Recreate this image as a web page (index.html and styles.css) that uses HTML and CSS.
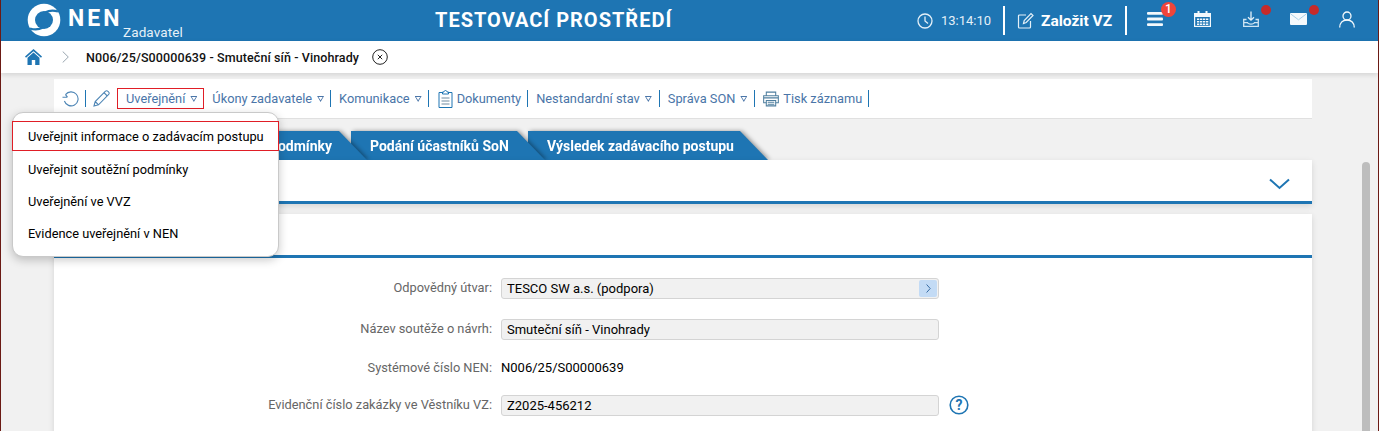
FILE: index.html
```html
<!DOCTYPE html>
<html lang="cs">
<head>
<meta charset="utf-8">
<title>NEN</title>
<link rel="stylesheet" href="styles.css">
</head>
<body>
<div class="app">
  <header class="top">
    <div class="brand">
      <svg class="logo" width="34" height="34" viewBox="0 0 34 34"><circle cx="17" cy="17" r="16.300" fill="#fff"/><circle cx="17" cy="17" r="9" fill="#1e75b3"/><path d="M18 9.500Q24 6.200 31 8.500M16 24.500Q10 27.800 3 25.500" fill="none" stroke="#1e75b3" stroke-width="2.200"/></svg>
      <span class="brand-name">NEN</span>
      <span class="brand-role">Zadavatel</span>
    </div>
    <div class="env">TESTOVACÍ PROSTŘEDÍ</div>
    <div class="top-right">
      <svg class="ic-clock" width="16" height="16" viewBox="0 0 16 16" fill="none" stroke="#e4f0f8" stroke-width="1.300"><circle cx="8" cy="8" r="7"/><path d="M8 3.500V8l3 2.500"/></svg>
      <span class="clock">13:14:10</span>
      <span class="top-sep"></span>
      <svg class="ic-edit" width="17" height="17" viewBox="0 0 17 17" fill="none" stroke="#e4f0f8" stroke-width="1.200"><path d="M9 3H2.500A1 1 0 0 0 1.500 4v11a1 1 0 0 0 1 1h10a1 1 0 0 0 1-1V9"/><path d="M6.500 11.500l.7-3L14 1.500l2 2-6.800 7z"/></svg>
      <span class="create">Založit VZ</span>
      <span class="top-sep"></span>
      <div class="icon-slot menu-slot">
        <svg width="16" height="14" viewBox="0 0 16 14" fill="#f4f9fc"><rect width="16" height="2.800" rx="1"/><rect y="5.600" width="16" height="2.800" rx="1"/><rect y="11.200" width="16" height="2.800" rx="1"/></svg>
        <span class="badge">1</span>
      </div>
      <div class="icon-slot cal-slot">
        <svg width="17" height="16" viewBox="0 0 17 16"><path d="M3.500 0h2v2h6V0h2v2H17v14H0V2h3.500z" fill="#f4f9fc"/><path d="M1.200 6h14.600v8.800H1.200z" fill="#1e75b3"/><path d="M3 7.500h2.300v1.500H3zM6 7.500h2.300v1.500H6zM9 7.500h2.300v1.500H9zM12 7.500h2.300v1.500H12zM3 10h2.300v1.500H3zM6 10h2.300v1.500H6zM9 10h2.300v1.500H9zM12 10h2.300v1.500H12zM3 12.500h2.300V14H3zM6 12.500h2.300V14H6zM9 12.500h2.300V14H9zM12 12.500h2.300V14H12z" fill="#f4f9fc"/></svg>
      </div>
      <div class="icon-slot dl-slot">
        <svg width="16" height="16" viewBox="0 0 16 16" fill="none" stroke="#e6f2f9" stroke-width="1.300"><path d="M8 .5v8.500M5 6.200L8 9.200l3-3"/><path d="M3.500 8.500H.7v6.800h14.600V8.500h-2.800M.7 11.700H4.500c.5 1.800 6.500 1.800 7 0h3.800" stroke="#cfe5f3"/></svg>
        <span class="dot"></span>
      </div>
      <div class="icon-slot mail-slot">
        <svg width="17" height="12" viewBox="0 0 17 12"><rect width="17" height="12" rx="1" fill="#f4f9fc"/><path d="M.5.800l8 6 8-6" fill="none" stroke="#a9d0e8" stroke-width="1"/></svg>
        <span class="dot"></span>
      </div>
      <div class="icon-slot user-slot">
        <svg width="16" height="17" viewBox="0 0 16 17" fill="none" stroke="#f4f9fc" stroke-width="1.300"><circle cx="8" cy="5" r="4"/><path d="M.7 16.500c0-4.500 3-7.500 7.300-7.500s7.300 3 7.300 7.500"/></svg>
      </div>
    </div>
  </header>

  <nav class="crumbs">
    <svg class="home" width="17" height="16" viewBox="0 0 17 16"><path d="M8.500 0L0 7.500l1 1.200L8.500 2.200 16 8.700l1-1.200z" fill="#1e75b3"/><path d="M8.500 3.500L2.500 8.700V16h4.300v-5h3.400v5h4.300V8.700z" fill="#1e75b3"/></svg>
    <svg class="crumb-arrow" width="7" height="12" viewBox="0 0 7 12" fill="none" stroke="#9aa6b0" stroke-width="1"><path d="M.7.500L6.300 6 .7 11.500"/></svg>
    <span class="crumb-title">N006/25/S00000639 - Smuteční síň - Vinohrady</span>
    <svg class="crumb-close" width="16" height="16" viewBox="0 0 16 16" fill="none" stroke="#222" stroke-width="1"><circle cx="8" cy="8" r="7.300"/><path d="M5.800 5.800l4.400 4.400M10.200 5.800l-4.400 4.400"/></svg>
  </nav>

  <main class="main">
    <div class="toolbar">
      <svg class="tb-refresh" width="17" height="16" viewBox="0 0 17 16" fill="none" stroke="#4d85b5" stroke-width="1.100"><path d="M3.500 3.600A7 7 0 1 1 2.400 10"/><path d="M.5 6.200h5M3.500 3.600l2 2.600"/></svg>
      <span class="tb-sep tb-sep-first"></span>
      <svg class="tb-pencil" width="17" height="17" viewBox="0 0 17 17" fill="none" stroke="#4d85b5" stroke-width="1.100"><path d="M1 16l1.200-4.500L12.500 1.200a1.500 1.500 0 0 1 2.200 0l1 1a1.500 1.500 0 0 1 0 2.200L5.500 14.800zM2.200 11.500l3.300 3.300M11 2.700l3.300 3.300"/></svg>
      <button class="tb-item tb-active">Uveřejnění <i class="tri"></i></button>
      <button class="tb-item">Úkony zadavatele <i class="tri"></i></button>
      <span class="tb-sep"></span>
      <button class="tb-item">Komunikace <i class="tri"></i></button>
      <span class="tb-sep"></span>
      <svg class="tb-doc" width="15" height="18" viewBox="0 0 15 18" fill="none" stroke="#1e75b3" stroke-width="1"><path d="M4.500 2.500H1v15h13v-15h-3.500"/><path d="M4.500 4V2H6c0-2 3-2 3 0h1.500v2z"/><path d="M3.500 8h8M3.500 11h8M3.500 14h8" stroke="#6f8ba0"/></svg>
      <button class="tb-item tb-icon-item">Dokumenty</button>
      <span class="tb-sep"></span>
      <button class="tb-item tb-wide">Nestandardní stav <i class="tri"></i></button>
      <span class="tb-sep"></span>
      <button class="tb-item tb-wide">Správa SON <i class="tri"></i></button>
      <span class="tb-sep"></span>
      <svg class="tb-print" width="16" height="16" viewBox="0 0 17 16" fill="none" stroke="#4f7f9f" stroke-width="1.100"><path d="M3.500 4V.7h10V4M3.500 12H.7V4.500h15.600V12h-2.800"/><path d="M3.500 9.500h10v5.800h-10zM5 11.500h7M5 13.500h7M1 6.800h15"/></svg>
      <button class="tb-item tb-icon-item">Tisk záznamu</button>
      <span class="tb-sep"></span>
    </div>

    <div class="tabs">
      <div class="tab tab-first"><span class="tab-label">Základní údaje a podmínky</span></div>
      <div class="tab tab-second"><span class="tab-label">Podání účastníků SoN</span></div>
      <div class="tab tab-third"><span class="tab-label">Výsledek zadávacího postupu</span></div>
    </div>

    <section class="panel panel-collapsed">
      <svg class="chev" width="21" height="12" viewBox="0 0 21 12" fill="none" stroke="#1e75b3" stroke-width="2"><path d="M1 1.500l9.500 8.500L20 1.500"/></svg>
    </section>

    <section class="panel panel-form">
      <div class="panel-head"></div>
      <div class="form">
        <label class="lbl lbl-first">Odpovědný útvar:</label>
        <div class="field field-pick"><span>TESCO SW a.s. (podpora)</span><span class="pick"><svg width="5" height="9" viewBox="0 0 5 9" fill="none" stroke="#3a6ea5" stroke-width="1"><path d="M.6.500l3.600 4-3.600 4"/></svg></span></div>
        <label class="lbl lbl-second">Název soutěže o návrh:</label>
        <div class="field">Smuteční síň - Vinohrady</div>
        <label class="lbl lbl-third">Systémové číslo NEN:</label>
        <div class="plain">N006/25/S00000639</div>
        <label class="lbl lbl-fourth">Evidenční číslo zakázky ve Věstníku VZ:</label>
        <div class="field-wrap">
          <div class="field">Z2025-456212</div>
          <svg class="help" width="20" height="20" viewBox="0 0 20 20"><circle cx="10" cy="10" r="8.800" fill="none" stroke="#1e75b3" stroke-width="1.600"/><text x="10" y="14.800" text-anchor="middle" class="help-q">?</text></svg>
        </div>
      </div>
    </section>
  </main>

  <div class="menu">
    <div class="menu-item menu-item-on">Uveřejnit informace o zadávacím postupu</div>
    <div class="menu-item">Uveřejnit soutěžní podmínky</div>
    <div class="menu-item">Uveřejnění ve VVZ</div>
    <div class="menu-item">Evidence uveřejnění v NEN</div>
  </div>
  <div class="scrollbar"></div>
</div>
</body>
</html>
```

FILE: styles.css
```css
* { box-sizing: border-box; }
html, body { margin: 0; height: 100%; overflow: hidden; }
body { font-family: Roboto, "Liberation Sans", sans-serif; font-size: 13px; background: #f1f1f1; color: #111; }
.app { position: relative; width: 1379px; height: 431px; overflow: hidden; border-left: 1px solid #6b1a14; border-right: 1px solid #6b1a14; }

.top { height: 41px; background: #1e75b3; display: flex; align-items: stretch; color: #fff; position: relative; }
.brand { width: 403px; display: flex; align-items: flex-start; position: relative; }
.logo { margin: 3px 0 0 26px; flex: none; }
.brand-name { font-size: 23px; font-weight: 700; letter-spacing: 3px; margin: 4px 0 0 7px; line-height: 30px; width: 55px; flex: none; }
.brand-role { font-size: 13.500px; color: #e6f1f8; margin: 24px 0 0 0; line-height: 16px; letter-spacing: .1px; }
.env { width: 300px; font-size: 20px; font-weight: 700; letter-spacing: 1px; line-height: 40px; white-space: nowrap; padding-left: 31px; }
.top-right { display: flex; align-items: center; flex: 1; padding-left: 213px; }
.clock { font-size: 13px; color: #e4f0f8; margin-left: 8px; width: 51px; flex: none; }
.ic-clock { flex: none; }
.top-sep { width: 2px; height: 29px; background: #fff; flex: none; margin-left: 11px; }
.ic-edit { margin-left: 12px; flex: none; }
.create { font-size: 15.500px; font-weight: 700; margin-left: 7px; width: 73px; white-space: nowrap; flex: none; }
.create + .top-sep { margin-left: 11px; }
.icon-slot { position: relative; display: flex; flex: none; margin-bottom: 3px; }
.menu-slot { margin-left: 20px; }
.cal-slot { margin-left: 31px; }
.dl-slot { margin-left: 32px; }
.mail-slot { margin-left: 31px; }
.user-slot { margin-left: 32px; }
.badge { position: absolute; left: 14px; top: -10px; width: 15px; height: 15px; border-radius: 50%; background: #f0453a; color: #fff; font-size: 12px; font-weight: 500; line-height: 15px; text-align: center; }
.dot { position: absolute; left: 18px; top: -6px; width: 10px; height: 10px; border-radius: 50%; background: #c62a2a; }
.mail-slot .dot { left: 19px; top: -8px; }

.crumbs { height: 32px; background: #fff; display: flex; align-items: center; box-shadow: 0 2px 5px rgba(0,0,0,.12); position: relative; }
.home { margin-left: 24px; flex: none; }
.crumb-arrow { margin-left: 20px; flex: none; }
.crumb-title { font-size: 12.500px; font-weight: 500; margin-left: 17px; white-space: nowrap; letter-spacing: .1px; }
.crumb-close { margin-left: 13px; flex: none; }

.main { padding: 6px 0 0 53px; width: 1311px; }
.toolbar { height: 40px; background: #fff; display: flex; align-items: center; border-bottom: 1px solid #e0e0e0; padding-left: 8px; }
.tb-item { font: inherit; font-size: 12.800px; color: #4a75a8; background: none; border: 1px solid transparent; padding: 0 5px 0 7px; height: 21px; display: flex; align-items: center; gap: 5px; white-space: nowrap; flex: none; }
.tb-active { border-color: #e01e26; margin-left: 7px; padding: 0 6px 0 8px; }
.tb-wide { padding-right: 6px; }
.tb-icon-item { padding-left: 3px; padding-right: 5px; }
.tri { width: 7px; height: 6px; display: inline-block; background: #4a75a8; clip-path: polygon(0 0, 100% 0, 50% 100%, 50% 70%, 80% 16%, 20% 16%, 50% 70%, 50% 100%); margin-top: 1px; flex: none; }
.tb-sep { width: 1px; height: 17px; background: #1e75b3; flex: none; }
.tb-sep-first { margin: 0 7px 0 6px; }
.tb-refresh, .tb-pencil, .tb-doc, .tb-print { flex: none; }
.tb-doc { margin-left: 9px; }
.tb-print { margin-left: 8px; }

.tabs { display: flex; height: 29px; margin-top: 12px; padding-left: 13px; }
.tab { height: 29px; color: #fff; font-size: 14px; font-weight: 700; line-height: 30px; white-space: nowrap; position: relative; filter: drop-shadow(2px 0 2px rgba(0,0,0,.38)); flex: none; }
.tab::before { content: ""; position: absolute; inset: 0; background: #1e75b3; clip-path: polygon(0 0, calc(100% - 28px) 0, 100% 100%, 0 100%); }
.tab-label { position: relative; display: block; }
.tab-first { width: 300px; z-index: 3; text-align: right; padding-right: 35px; }
.tab-second { width: 194px; margin-left: -16px; z-index: 2; padding-left: 19px; }
.tab-third { width: 240px; margin-left: -17px; z-index: 1; padding-left: 19px; }

.panel { background: #fff; box-shadow: 0 2px 6px rgba(0,0,0,.12); position: relative; }
.panel-collapsed { height: 44px; border-bottom: 3px solid #1e75b3; display: flex; justify-content: flex-end; align-items: flex-start; padding: 18px 22px 0 0; z-index: 4; }
.panel-form { margin-top: 10px; height: 240px; }
.panel-head { height: 44px; border-bottom: 3px solid #1e75b3; }
.form { display: grid; grid-template-columns: 438px 1fr; column-gap: 9px; padding-top: 20px; align-items: center; }
.lbl { font-size: 12.800px; color: #666; text-align: right; white-space: nowrap; margin-bottom: 20px; }
.lbl-first, .lbl-second, .lbl-fourth { position: relative; top: -1px; }
.lbl-fourth { margin-bottom: 0; }
.field { width: 438px; height: 21px; background: #f1f1f1; border: 1px solid #d4d4d4; border-radius: 3px; font-size: 13px; line-height: 19px; padding-left: 5px; color: #000; flex: none; }
.field-pick { display: flex; justify-content: space-between; }
.pick { width: 18px; height: 17px; margin: 1px 1px 0 0; background: #c3dbf5; border-radius: 2px; display: flex; align-items: center; justify-content: center; }
.form > .field { margin-bottom: 20px; }
.plain { font-size: 13px; height: 15px; line-height: 15px; margin-bottom: 20px; color: #000; }
.field-wrap { display: flex; align-items: flex-start; gap: 10px; }
.help { flex: none; }
.help-q { font: 700 14px Roboto, sans-serif; fill: #1e75b3; }

.menu { position: absolute; left: 11px; top: 112px; width: 267px; height: 145px; background: #fff; border: 1px solid #c9c9c9; border-radius: 11px; box-shadow: 0 3px 10px rgba(0,0,0,.22); padding-top: 8px; z-index: 5; }
.menu-item { height: 32px; line-height: 32px; padding-left: 15px; font-size: 12.800px; color: #000; white-space: nowrap; }
.menu-item-on { height: 30px; line-height: 30px; border: 1px solid #e01e26; margin: 0 -1px 3px -1px; }
.scrollbar { position: absolute; left: 1361px; top: 162px; width: 8px; height: 280px; background: #bdbdbd; border-radius: 4px 4px 0 0; }
```
